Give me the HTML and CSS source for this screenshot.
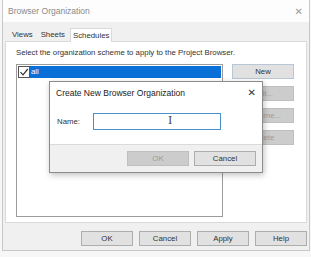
FILE: index.html
```html
<!DOCTYPE html>
<html>
  <head>
    <meta charset="utf-8" />
    <title>Browser Organization</title>
    <link rel="stylesheet" href="styles.css">
  </head>
  <body>
    <div class="win">
      <div class="win-title">
        <span>Browser Organization</span>
        <span class="x">&#x2715;</span>
      </div>
      <div class="win-body">
        <div class="tabs">
          <span class="tab">Views</span>
          <span class="tab">Sheets</span>
          <span class="tab active">Schedules</span>
        </div>
        <div class="panel">
          <p class="hint">Select the organization scheme to apply to the Project Browser.</p>
          <div class="panel-row">
            <div class="list">
              <div class="item">
                <span class="check">
                  <svg width="10" height="10" viewBox="0 0 10 10"><path d="M1.5 5.2 L4 7.8 L8.8 2" fill="none" stroke="#333" stroke-width="1.2"/></svg>
                </span>
                <span class="sel">all</span>
              </div>
            </div>
            <div class="side">
              <button class="btn">New</button>
              <button class="btn off">Edit...</button>
              <button class="btn off">Rename...</button>
              <button class="btn off">Delete</button>
            </div>
          </div>
        </div>
        <div class="footer">
          <button class="btn">OK</button>
          <button class="btn">Cancel</button>
          <button class="btn">Apply</button>
          <button class="btn">Help</button>
        </div>
      </div>

      <div class="dlg">
        <div class="dlg-title">
          <span>Create New Browser Organization</span>
          <span class="x dark">&#x2715;</span>
        </div>
        <div class="dlg-body">
          <label>Name:</label>
          <div class="field"><span class="ibeam">I</span></div>
        </div>
        <div class="dlg-foot">
          <button class="btn off">OK</button>
          <button class="btn">Cancel</button>
        </div>
      </div>
    </div>
  </body>
</html>
```

FILE: styles.css
```css
html,
body {
  margin: 0;
  background: #f7f7f7;
  font-family: "Liberation Sans", Arial, sans-serif;
  font-size: 7.8px;
  color: #333;
}
.win {
  position: relative;
  width: 306px;
  height: 250px;
  margin-left: 2px;
  border: 1px solid #c8c8c8;
  border-top: none;
  background: #f0f0f0;
}
.win-title {
  height: 22px;
  background: #fdfdfd;
  color: #8a8a8a;
  display: flex;
  align-items: center;
  justify-content: space-between;
  padding: 0 6px 0 5px;
  font-size: 8.5px;
}
.x {
  color: #9a9a9a;
  font-family: "DejaVu Sans", sans-serif;
  font-size: 10px;
}
.x.dark {
  color: #333;
}
.win-body {
  padding: 5px 2px 0 2px;
}
.tabs {
  display: flex;
  align-items: flex-end;
  height: 14px;
  padding-left: 3px;
}
.tab {
  padding: 0 4px;
  line-height: 12px;
}
.tab.active {
  background: #fff;
  border: 1px solid #d9d9d9;
  border-bottom: none;
  line-height: 13px;
  padding: 0 2px;
  margin-left: 1px;
  position: relative;
  top: 1px;
}
.panel {
  background: #fff;
  border: 1px solid #d9d9d9;
  height: 182px;
  box-sizing: border-box;
  padding: 5px 0 0 10px;
}
.hint {
  margin: 0 0 6px 0;
  line-height: 11px;
}
.panel-row {
  display: flex;
}
.list {
  width: 207px;
  height: 153px;
  box-sizing: border-box;
  border: 1px solid #9c9c9c;
  padding: 1px;
}
.item {
  display: flex;
  height: 12px;
}
.check {
  width: 10px;
  height: 10px;
  border: 1px solid #555;
  background: #fff;
  box-sizing: content-box;
  display: flex;
}
.sel {
  flex: 1;
  background: #0a6fd6;
  color: #fff;
  line-height: 12px;
  padding-left: 1px;
}
.side {
  display: flex;
  flex-direction: column;
  gap: 7px;
  margin-left: 9px;
}
.btn {
  font: inherit;
  width: 62px;
  height: 15px;
  padding: 0;
  margin: 0;
  background: #e1e1e1;
  border: 1px solid #adadad;
  color: #333;
  line-height: 13px;
}
.btn.off {
  background: #cccccc;
  border-color: #bfbfbf;
  color: #9c9c9c;
}
.side .btn:first-child {
  border-color: #b8c7d6;
}
.footer {
  display: flex;
  justify-content: flex-end;
  gap: 6px;
  padding: 8px 0 0 0;
}
.footer .btn {
  width: 52px;
}
.dlg {
  position: absolute;
  left: 46px;
  top: 81px;
  width: 214px;
  height: 92px;
  background: #fff;
  border: 1px solid #8c8c8c;
  box-sizing: border-box;
  box-shadow: 1px 2px 6px rgba(0, 0, 0, 0.25);
  display: flex;
  flex-direction: column;
}
.dlg-title {
  height: 21px;
  display: flex;
  align-items: center;
  justify-content: space-between;
  padding: 0 6px;
  color: #222;
  font-size: 8.5px;
}
.dlg-body {
  flex: 1;
  display: flex;
  align-items: center;
  padding-left: 7px;
  padding-bottom: 4px;
}
.dlg-body label {
  width: 36px;
}
.field {
  width: 128px;
  height: 17px;
  box-sizing: border-box;
  border: 1px solid #4a90d0;
  position: relative;
}
.ibeam {
  position: absolute;
  left: 74px;
  top: 1px;
  font-family: "DejaVu Serif", serif;
  font-size: 11px;
  line-height: 12px;
  color: #444;
}
.dlg-foot {
  height: 27px;
  background: #f0f0f0;
  border-top: 1px solid #dadada;
  display: flex;
  justify-content: flex-end;
  align-items: center;
  gap: 5px;
  padding-right: 6px;
}
```
